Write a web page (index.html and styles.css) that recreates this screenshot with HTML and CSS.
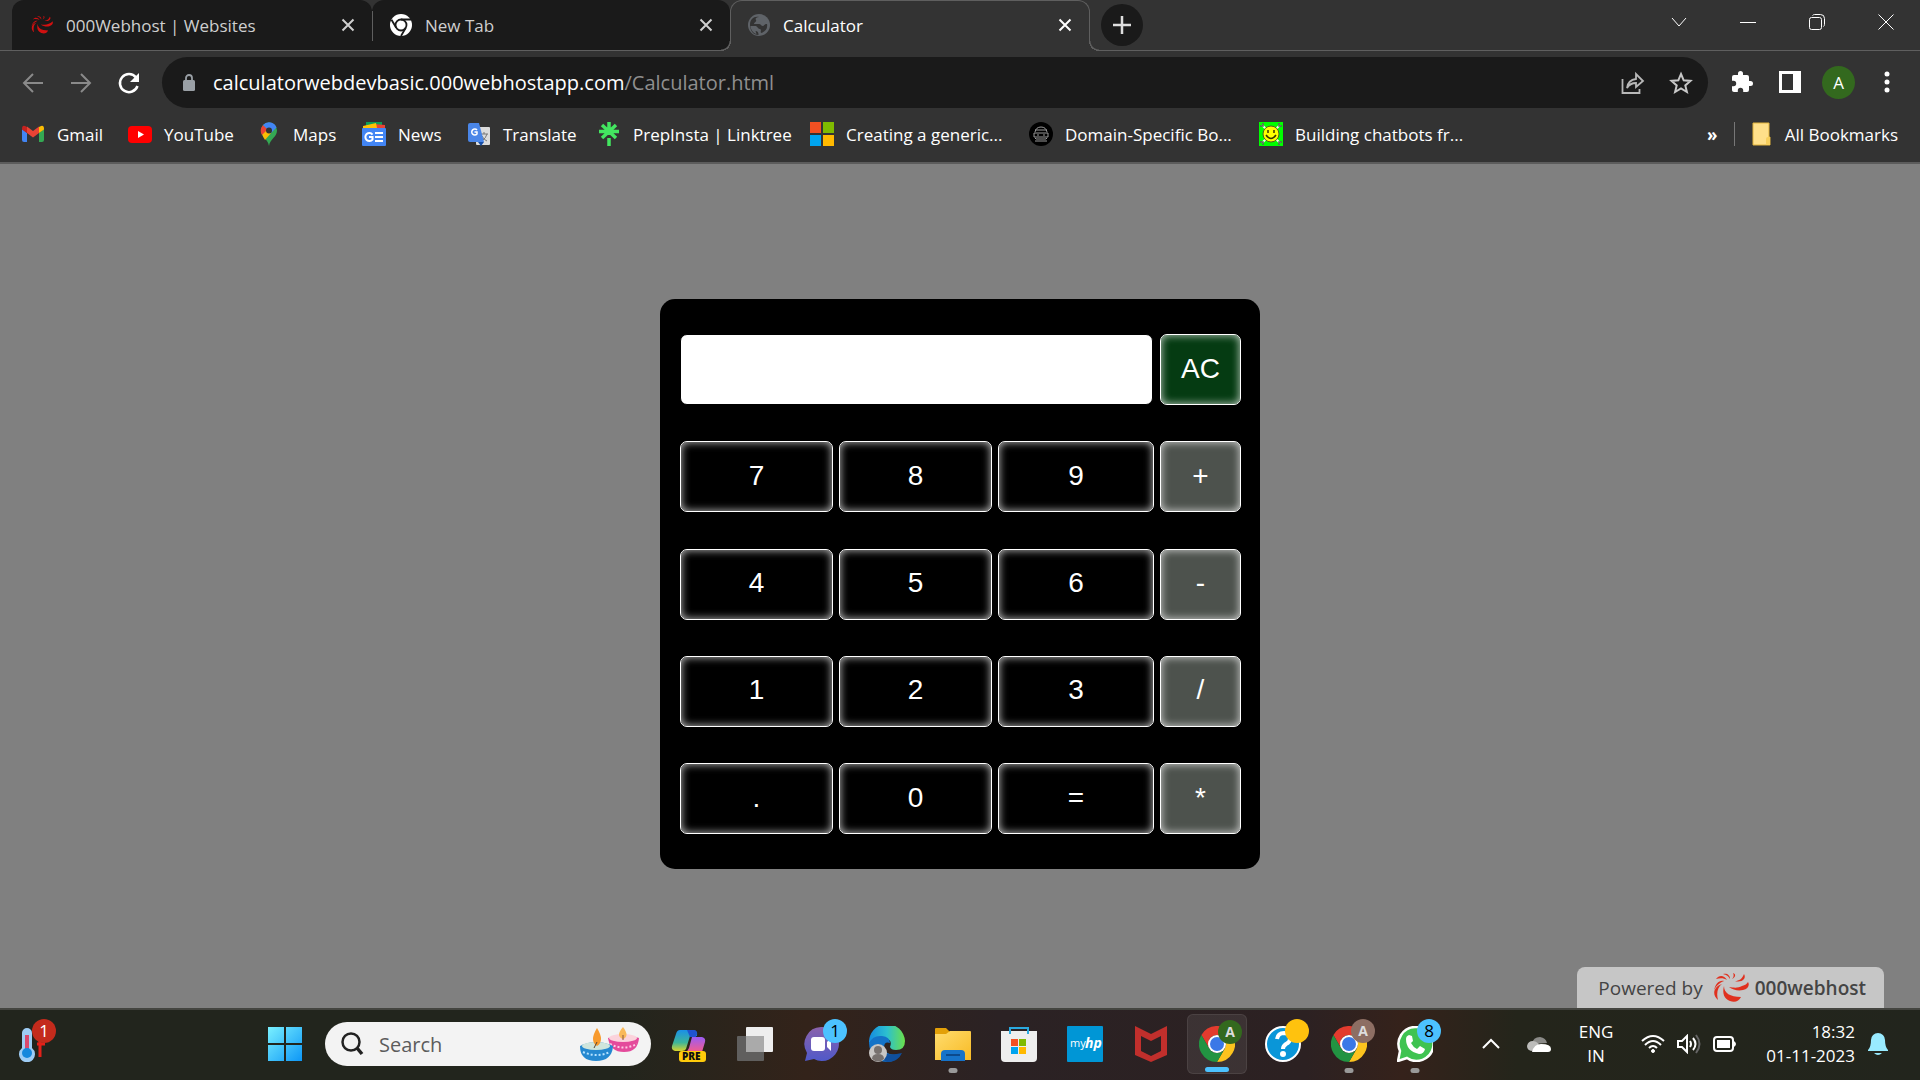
FILE: index.html
```html
<!DOCTYPE html>
<html lang="en">
<head>
<meta charset="utf-8">
<title>Calculator</title>
<link rel="stylesheet" href="styles.css">
</head>
<body>
<svg class="defs" aria-hidden="true">
  <defs>
    <symbol id="close" viewBox="0 0 14 14"><path d="M1.500 1.500l11 11M12.500 1.500l-11 11" stroke="currentColor" stroke-width="2" fill="none"/></symbol>
    <symbol id="swirl" viewBox="0 0 36 30">
      <path d="M35 9c2 3 0 7-5 8-5 1-10 0-14-3 6 1 9 1 13-1 3-1 5-2 6-4z"/>
      <path d="M11 13c0 7 6 11 17 11-2 4-6 6-11 4-6-2-8-8-6-15z"/>
      <path d="M9 11C5 14 3 19 5 27c-6-5-5-13 4-16z"/>
      <path d="M11 8C6 7 2 11 1 18c1-4 5-8 10-10z"/>
      <path d="M14 7C11 2 6 2 3 6c4-1 8-1 11 1z"/>
      <path d="M17 6c0-4-3-6-7-5 4 1 5 2 7 5zM19 6c4-2 4-5 1-6 1 2 1 4-1 6zM22 8c4 0 7-2 9-7 3 5-3 9-9 7z"/>
    </symbol>
    <symbol id="chrome" viewBox="0 0 36 36">
      <path fill="#e33b2e" d="M2.400 9A18 18 0 0 1 33.600 9H18a9 9 0 0 0-7.800 4.500L10 22z"/>
      <path fill="#fcc31e" d="M33.600 9A18 18 0 0 1 18 36l7.800-13.500A9 9 0 0 0 18 9z"/>
      <path fill="#229342" d="M18 36A18 18 0 0 1 2.400 9l7.800 13.500A9 9 0 0 0 25.800 22.500z"/>
      <circle cx="18" cy="18" r="9" fill="#fff"/><circle cx="18" cy="18" r="7" fill="#3b78e7"/>
    </symbol>
  </defs>
</svg>

<header class="browser">
  <div class="tabstrip">
    <div class="tab">
      <svg class="favicon swirl" viewBox="0 0 36 30"><use href="#swirl"/></svg>
      <span class="tab-title">000Webhost | Websites</span>
      <button class="tab-close" aria-label="Close tab"><svg width="14" height="14"><use href="#close"/></svg></button>
    </div>
    <div class="tab tab-second">
      <svg class="favicon" viewBox="0 0 22 22"><circle cx="11" cy="11" r="11" fill="#fff"/><circle cx="11" cy="11" r="5.500" fill="#fff" stroke="#1a1a1a" stroke-width="1.800"/><path d="M11 5.500h10M6.200 13.800L1.500 5.700M15.800 13.800L11 22" stroke="#1a1a1a" stroke-width="1.800"/></svg>
      <span class="tab-title">New Tab</span>
      <button class="tab-close" aria-label="Close tab"><svg width="14" height="14"><use href="#close"/></svg></button>
    </div>
    <div class="tab tab-active">
      <svg class="favicon" viewBox="0 0 22 22"><circle cx="11" cy="11" r="11" fill="#5f6368"/><path d="M11 3c-3 0-4 2-3 3 1 2-2 2-2 4h5c2 0 2 2 4 2 1 0 1-2 4-2 1 5-2 8-6 9-1-2 1-3-1-4-2 0-2-2-4-3H2.500c0 3 2 7 6 8l-1-3c2 0 3 1 3 4-5 0-8.500-4-8.500-10S6 2 11 3z" fill="#333"/></svg>
      <span class="tab-title">Calculator</span>
      <button class="tab-close" aria-label="Close tab"><svg width="14" height="14"><use href="#close"/></svg></button>
    </div>
    <button class="new-tab" aria-label="New tab"><svg width="18" height="18" viewBox="0 0 18 18"><path d="M9 0v18M0 9h18" stroke="#dedede" stroke-width="2.500"/></svg></button>
    <div class="window-controls">
      <button aria-label="Search tabs"><svg width="16" height="16" viewBox="0 0 16 16"><path d="M1 4l7 8 7-8"/></svg></button>
      <button aria-label="Minimize"><svg width="16" height="16" viewBox="0 0 16 16"><path d="M0 8.500h16"/></svg></button>
      <button aria-label="Restore"><svg width="16" height="16" viewBox="0 0 16 16"><rect x=".5" y="3.500" width="12" height="12" rx="2"/><path d="M3.500 1.500q1-1 2-1h6q4 0 4 4v6q0 1-1 2"/></svg></button>
      <button aria-label="Close"><svg width="16" height="16" viewBox="0 0 16 16"><path d="M.5.5l15 15M15.500.5l-15 15"/></svg></button>
    </div>
  </div>

  <div class="toolbar">
    <button class="nav dim" aria-label="Back"><svg width="24" height="24" viewBox="0 0 24 24"><path d="M22 12H3M12 3l-9 9 9 9"/></svg></button>
    <button class="nav dim" aria-label="Forward"><svg width="24" height="24" viewBox="0 0 24 24"><path d="M2 12h19M12 3l9 9-9 9"/></svg></button>
    <button class="nav" aria-label="Reload"><svg width="24" height="24" viewBox="0 0 24 24"><path d="M20.500 15A9 9 0 1 1 19 6.500" stroke-width="2.500"/><path d="M22 2v9h-9z" fill="#fff" stroke="none"/></svg></button>
    <div class="omnibox">
      <svg width="14" height="18" viewBox="0 0 14 18"><rect x="1" y="6" width="12" height="11" rx="1.500" fill="#9aa0a6"/><path d="M4 7V4a3 3 0 0 1 6 0v3" fill="none" stroke="#9aa0a6" stroke-width="1.800"/></svg>
      <div class="url">calculatorwebdevbasic.000webhostapp.com<span>/Calculator.html</span></div>
      <button aria-label="Share"><svg width="24" height="24" viewBox="0 0 24 24"><path d="M1.500 8v14h17v-4M6 17q1-8 9-9V3l7 7-7 6v-4q-6 0-9 5z" fill="none" stroke="#b8b8b8" stroke-width="1.800"/></svg></button>
      <button aria-label="Bookmark this page"><svg width="24" height="24" viewBox="0 0 24 24"><path d="M12 3l2.700 6.300 6.800.6-5.200 4.500 1.600 6.600-5.900-3.500L6.100 21l1.600-6.600-5.200-4.500 6.800-.6z" fill="none" stroke="#c8c8c8" stroke-width="2"/></svg></button>
    </div>
    <div class="toolbar-actions">
      <button aria-label="Extensions"><svg width="24" height="24" viewBox="0 0 24 24"><path fill="#fff" d="M20.500 11H19V7a2 2 0 0 0-2-2h-4V3.500a2.500 2.500 0 0 0-5 0V5H4a2 2 0 0 0-2 2v3.800h1.500a2.700 2.700 0 0 1 0 5.400H2V20c0 1.100.9 2 2 2h3.800v-1.500a2.700 2.700 0 0 1 5.400 0V22H17a2 2 0 0 0 2-2v-4h1.500a2.500 2.500 0 0 0 0-5z"/></svg></button>
      <button aria-label="Side panel"><svg width="22" height="22" viewBox="0 0 22 22"><path fill="#fff" fill-rule="evenodd" d="M0 0h22v22H0zM3 3v16h11V3z"/></svg></button>
      <button class="avatar" aria-label="Profile">A</button>
      <button aria-label="Menu"><svg width="6" height="22" viewBox="0 0 6 22" fill="#fff"><circle cx="3" cy="3" r="2.500"/><circle cx="3" cy="11" r="2.500"/><circle cx="3" cy="19" r="2.500"/></svg></button>
    </div>
  </div>

  <nav class="bookmarks">
    <div class="bookmark-list">
    <a href="#"><svg viewBox="0 0 24 24"><path fill="#4285f4" d="M1 7l5 4v9H3q-2 0-2-2z"/><path fill="#34a853" d="M23 7l-5 4v9h3q2 0 2-2z"/><path fill="#ea4335" d="M6 4.500l6 4.500 6-4.500V11l-6 4.500L6 11z"/><path fill="#c5221f" d="M1 7q0-4 3-3l2 1v6L1 7.500z"/><path fill="#fbbc04" d="M23 7q0-4-3-3l-2 1v6l5-3.500z"/></svg>Gmail</a>
    <a href="#"><svg viewBox="0 0 24 24"><rect y="4" width="24" height="17" rx="4" fill="#f00"/><path d="M10 9l6 3.500-6 3.500z" fill="#fff"/></svg>YouTube</a>
    <a href="#"><svg viewBox="0 0 24 24"><path fill="#34a853" d="M12 24C11 17 4 15 4 8.500a8 8 0 0 1 16 0C20 15 13 17 12 24z"/><path fill="#fbbc04" d="M5 12l5-6 4 5-6 7q-2-3-3-6z"/><path fill="#ea4335" d="M6 3l5 4-6 6q-3-5 1-10z"/><path fill="#4285f4" d="M6 3q3-3.500 8-2.500 4 1 5.500 5L14 11 6 3z"/><circle cx="12" cy="8.500" r="3" fill="#333"/></svg>Maps</a>
    <a href="#"><svg viewBox="0 0 24 24"><path fill="#0c9d58" d="M4 0h16v6H4z"/><path fill="#ea4335" d="M12 2l11 1v4H12z"/><path fill="#ffc107" d="M1 4l13-3 1 5-14 2z"/><rect y="6" width="24" height="18" rx="1" fill="#4285f4"/><path d="M10.500 12.500a4 4 0 1 0 0 5V15H7M13 11h8M13 15h8M13 19h8" fill="none" stroke="#fff" stroke-width="2"/></svg>News</a>
    <a href="#"><svg viewBox="0 0 24 24"><rect x="9" y="5" width="14" height="18" rx="1" fill="#dcdcdc"/><path d="M13 12h8M17 10v2M20 12q-1 4-5 7M15 14q2 4 5 5" stroke="#777" fill="none"/><path d="M3 1h9l5 19H3q-2 0-2-2V3q0-2 2-2z" fill="#4a86e8"/><path d="M11 20h6l-3 4z" fill="#174ea6"/><path d="M10 8a3 3 0 1 0 0 4v-2H7.500" fill="none" stroke="#fff" stroke-width="1.500"/></svg>Translate</a>
    <a href="#"><svg viewBox="0 0 24 24"><path d="M12 0v13M2 9.500h20M5 3l14 13M19 3L5 16M12 16v8" stroke="#43e660" stroke-width="3.500" fill="none"/></svg>PrepInsta | Linktree</a>
    <a href="#"><svg viewBox="0 0 24 24"><path fill="#f25022" d="M0 0h11v11H0z"/><path fill="#7fba00" d="M13 0h11v11H13z"/><path fill="#00a4ef" d="M0 13h11v11H0z"/><path fill="#ffb900" d="M13 13h11v11H13z"/></svg>Creating a generic...</a>
    <a href="#"><svg viewBox="0 0 24 24"><circle cx="12" cy="12" r="12" fill="#000"/><path d="M6 10q1-5 6-5t6 5M6 8h12M5 11h14v4H5zM8 13h2M14 13h2M6 16l1 1h10l1-1M6 19h12" fill="none" stroke="#999"/></svg>Domain-Specific Bo...</a>
    <a href="#"><svg viewBox="0 0 24 24"><path fill="#0f0" d="M0 0h24v24H0z"/><path d="M3 3l18 18M21 3L3 21" stroke="#efe" stroke-width="2"/><path d="M1 4h3V1M20 1v3h3M1 20h3v3M20 23v-3h3" stroke="#565" stroke-width="1.500" fill="none"/><circle cx="12" cy="12" r="8" fill="#ff0" stroke="#552"/><path d="M9 8v3M15 8v3M7 13q5 7 10 0" fill="none" stroke="#330" stroke-width="1.500"/></svg>Building chatbots fr...</a>
    </div>
    <button class="overflow" aria-label="More bookmarks">»</button>
    <a href="#" class="all-bookmarks"><svg viewBox="0 0 24 24"><path d="M3 1h16v14h1v8H3z" fill="#ffe08a" stroke="#e2b43c"/><path d="M16 22v-5q0-2 2-2h2v8h-3z" fill="#f7cf5c"/></svg>All Bookmarks</a>
  </nav>
</header>

<main class="page">
  <form class="calculator">
    <input class="display" type="text" aria-label="Display">
    <button type="button" class="clear">AC</button>
    <button type="button">7</button><button type="button">8</button><button type="button">9</button><button type="button" class="op">+</button>
    <button type="button">4</button><button type="button">5</button><button type="button">6</button><button type="button" class="op">-</button>
    <button type="button">1</button><button type="button">2</button><button type="button">3</button><button type="button" class="op">/</button>
    <button type="button">.</button><button type="button">0</button><button type="button">=</button><button type="button" class="op">*</button>
  </form>
  <a class="powered" href="#">Powered by <svg width="36" height="30" viewBox="0 0 36 30" fill="#e0301e"><use href="#swirl"/></svg><b>000webhost</b></a>
</main>

<footer class="taskbar">
  <button class="widget" aria-label="Weather">
    <svg width="36" height="36" viewBox="0 0 36 36"><path d="M3 7a5 5 0 0 1 10 0v15a8 8 0 1 1-10 0z" fill="#9fcdf5"/><path d="M6 9h4v15H6z" fill="#d9486e"/><circle cx="8" cy="27" r="5" fill="#1688dd"/><path d="M21 15v16M18 18h8" stroke="#e32119" stroke-width="3"/></svg>
    <span class="badge badge-red">1</span>
  </button>
  <div class="taskbar-center">
    <button class="start" aria-label="Start"><svg width="36" height="36" viewBox="0 0 36 36"><defs><linearGradient id="win" x1="0" y1="0" x2="36" y2="36" gradientUnits="userSpaceOnUse"><stop stop-color="#7df3ff"/><stop offset="1" stop-color="#0a94f6"/></linearGradient></defs><path fill="url(#win)" d="M1 1h16v16H1zM19 1h16v16H19zM1 19h16v16H1zM19 19h16v16H19z"/></svg></button>
    <label class="search">
      <svg width="24" height="24" viewBox="0 0 24 24"><circle cx="11" cy="10" r="8.500" fill="none" stroke="#222" stroke-width="2.500"/><path d="M17 16l5 6" stroke="#222" stroke-width="3.500"/></svg>
      <input type="text" placeholder="Search" aria-label="Search">
      <svg width="60" height="36" viewBox="0 0 60 36">
        <path d="M28 12q16-6 31 0-1 14-15 14T28 12z" fill="#e44a9b"/><ellipse cx="43" cy="12" rx="14" ry="4" fill="#fbd3dc"/><path d="M43 1q-8 9 0 12 7-3 0-12z" fill="#f9b95a"/><path d="M43 9v5" stroke="#854" /><path d="M30 18q13 7 27 0" stroke="#ffc9e4" stroke-width="2" stroke-dasharray="2 2" fill="none"/>
        <path d="M0 20q16-8 33 0-1 15-17 15T0 20z" fill="#2588d0"/><ellipse cx="16" cy="20" rx="14" ry="4" fill="#cfe5dc"/><path d="M17 2q-8 13 0 18 8-5 0-18z" fill="#f79a2d"/><path d="M17 16l-3 6" stroke="#543"/><path d="M3 26q14 6 27 0" stroke="#b5e2ff" stroke-width="2" stroke-dasharray="2 2" fill="none"/>
      </svg>
    </label>
    <div class="apps">
      <button class="app" aria-label="Copilot"><svg width="36" height="36" viewBox="0 0 36 36"><defs><linearGradient id="cpa" x2="0" y2="1"><stop stop-color="#1a8fe8"/><stop offset=".6" stop-color="#3db59a"/><stop offset="1" stop-color="#d8d32c"/></linearGradient><linearGradient id="cpb" x2="0" y2="1"><stop stop-color="#9a5cf5"/><stop offset="1" stop-color="#f65c8a"/></linearGradient></defs><path d="M9 4h12l4 1q2 2 1 5h-7l-4 13q-1 2-4 2H4q-4-1-3-5L5 8q1-4 4-4z" fill="url(#cpa)"/><path d="M16 4h7q3 0 3 4l-1 3h-6z" fill="#1f53cf"/><path d="M21 11h10q4 1 3 5l-3 10H14q3-1 4-4z" fill="url(#cpb)"/><rect x="8" y="25" width="27" height="11" rx="3" fill="#ffcb0b"/><text x="11" y="34" class="pre">PRE</text></svg></button>
      <button class="app" aria-label="Task view"><svg width="36" height="36" viewBox="0 0 36 36"><rect x="9" y="1" width="27" height="25" rx="1" fill="#eee"/><rect y="10" width="27" height="25" rx="1" fill="#666" fill-opacity=".9"/><path d="M9 10h18v16H9z" fill="#aaa"/></svg></button>
      <button class="app" aria-label="Chat"><svg width="36" height="36" viewBox="0 0 36 36"><defs><linearGradient id="cht" x2="0" y2="1"><stop stop-color="#8a62ab"/><stop offset="1" stop-color="#5059c9"/></linearGradient></defs><path d="M18 1a17 17 0 1 1-7 32l-9 2 2-8A17 17 0 0 1 18 1z" fill="url(#cht)"/><rect x="8" y="11" width="14" height="14" rx="3" fill="#fff"/><path d="M24 16l4-4v13l-4-4z" fill="#fff"/></svg><span class="badge">1</span></button>
      <button class="app" aria-label="Edge"><svg width="36" height="36" viewBox="0 0 36 36"><defs><linearGradient id="edg"><stop stop-color="#158be0"/><stop offset=".5" stop-color="#2cc0cf"/><stop offset="1" stop-color="#6be04a"/></linearGradient></defs><path d="M0 17A18 18 0 0 1 36 15q0 9-9 9-5 0-6-3 3-8-5-8Q7 13 0 17z" fill="url(#edg)"/><path d="M0 17q4-8 13-7 8 1 8 7-6-2-6 5 2 9 17 6-5 8-14 8Q1 35 0 17z" fill="#1473c8"/><path d="M13 20q0 12 20 7-4 9-15 9-9-4-5-16z" fill="#0f4f9d"/><circle cx="9" cy="27" r="9" fill="#c8c6c5"/><circle cx="9" cy="24" r="4" fill="#77716f"/><path d="M3 33q0-5 6-5t6 5q-6 5-12 0z" fill="#77716f"/></svg></button>
      <button class="app running" aria-label="File Explorer"><svg width="36" height="36" viewBox="0 0 36 36"><defs><linearGradient id="fol" x2="1" y2="1"><stop stop-color="#ffdc6e"/><stop offset="1" stop-color="#f8bb25"/></linearGradient></defs><path d="M0 3q0-1 1-1h10l4 4v10H0z" fill="#e3a008"/><path d="M0 8h11l4-3h20q1 0 1 1v28H0z" fill="url(#fol)"/><path d="M6 35v-7q0-4 4-4h16q4 0 4 4v7z" fill="#1673c9"/><path d="M11 29h14" stroke="#0c4a8c" stroke-width="2"/></svg></button>
      <button class="app" aria-label="Microsoft Store"><svg width="36" height="36" viewBox="0 0 36 36"><path d="M0 5h36v27q0 4-4 4H4q-4 0-4-4z" fill="#eee"/><path d="M9 8V2h18v6" fill="none" stroke="#2aa9df" stroke-width="2"/><path fill="#f25022" d="M10 13h7v7h-7z"/><path fill="#7fba00" d="M18 13h7v7h-7z"/><path fill="#00a4ef" d="M10 21h7v7h-7z"/><path fill="#ffb900" d="M18 21h7v7h-7z"/></svg></button>
      <button class="app" aria-label="myHP"><svg width="36" height="36" viewBox="0 0 36 36"><rect width="36" height="36" rx="1" fill="#0096d6"/><text x="3" y="21" class="my">my</text><text x="18" y="22" class="hp">hp</text></svg></button>
      <button class="app" aria-label="McAfee"><svg width="36" height="36" viewBox="0 0 36 36"><path fill="#c12f2c" fill-rule="evenodd" d="M2 0l16 8 16-8v29l-16 7-16-7zM8 10v15l10 5 10-5V10l-10 5z"/></svg></button>
      <button class="app current" aria-label="Chrome"><svg width="36" height="36"><use href="#chrome"/></svg><span class="badge badge-green">A</span></button>
      <button class="app" aria-label="Help"><svg width="36" height="36" viewBox="0 0 36 36"><circle cx="18" cy="18" r="17" fill="#0a96d8" stroke="#fff" stroke-width="2"/><path d="M12 13q1-6 7-6 7 1 6 6 0 3-4 5-3 2-3 5" fill="none" stroke="#fff" stroke-width="4"/><circle cx="18" cy="28" r="3" fill="#fff"/></svg><span class="badge badge-yellow"></span></button>
      <button class="app running" aria-label="Chrome, second profile"><svg width="36" height="36"><use href="#chrome"/></svg><span class="badge badge-brown">A</span></button>
      <button class="app running" aria-label="WhatsApp"><svg width="36" height="36" viewBox="0 0 36 36"><path d="M18 1a17 17 0 1 1-8 31l-9 3 2-10A17 17 0 0 1 18 1z" fill="#3fc351" stroke="#fff" stroke-width="2.500"/><path d="M12 9l3 1 1 5-2 2q2 4 6 6l3-3 5 3q-1 5-6 5Q9 25 9 13q0-3 3-4z" fill="#fff"/></svg><span class="badge">8</span></button>
    </div>
  </div>
  <div class="tray">
    <button aria-label="Show hidden icons"><svg width="18" height="12" viewBox="0 0 18 12"><path d="M1 10l8-8 8 8" fill="none" stroke="#fff" stroke-width="2"/></svg></button>
    <svg width="24" height="18" viewBox="0 0 24 18"><path d="M5 9q1-7 8-7 6 1 7 6z" fill="#8b8b88"/><path d="M6 16q-6 0-6-5 1-5 6-5 3 0 6 3z" fill="#bcbcba"/><path d="M5 17q2-8 9-8 10 0 10 5 0 3-3 3z" fill="#fff"/></svg>
    <button class="lang">ENG<br>IN</button>
    <button class="status" aria-label="Network, sound and battery">
      <svg width="24" height="20" viewBox="0 0 24 20" fill="none" stroke="#fff" stroke-width="2"><path d="M1 7q11-10 22 0M4 11q8-8 16 0M8 14q4-4 8 0"/><circle cx="12" cy="17" r="1.500" fill="#fff" stroke-width="1"/></svg>
      <svg width="24" height="20" viewBox="0 0 24 20" fill="none" stroke="#fff" stroke-width="2"><path d="M1 7h4l5-5v16l-5-5H1zM13 7q2 3 0 6M16 4q5 6 0 12"/><path d="M19 1q7 9 0 18" stroke="#666"/></svg>
      <svg width="24" height="20" viewBox="0 0 24 20"><rect x="1" y="3" width="19" height="14" rx="3" fill="none" stroke="#fff" stroke-width="2"/><path d="M4 6h13v8H4zM21 7q4 3 0 6z" fill="#fff"/></svg>
    </button>
    <button class="clock">18:32<br>01-11-2023</button>
    <svg width="20" height="24" viewBox="0 0 20 24"><path d="M0 18q3-3 3-10a7 7 0 0 1 14 0q0 7 3 10v1H0zM6 21h8q-4 4-8 0z" fill="#99ebff"/></svg>
  </div>
</footer>
</body>
</html>
```
FILE: styles.css
```css
* { box-sizing: border-box; }
body {
  margin: 0;
  min-height: 100vh;
  display: flex;
  flex-direction: column;
  font-family: "Open Sans", "Noto Sans", sans-serif;
  font-size: 17px;
  color: #fff;
  background: #808080;
}
button {
  display: flex;
  align-items: center;
  justify-content: center;
  padding: 0;
  border: 0;
  background: none;
  color: inherit;
  font: inherit;
}
a { color: inherit; text-decoration: none; }
svg { display: block; flex: none; }
.defs { position: absolute; width: 0; height: 0; }

/* Browser chrome */
.browser { background: #333; border-bottom: 2px solid #5c5c5c; }
.tabstrip {
  display: flex;
  height: 51px;
  padding-left: 12px;
  border-bottom: 1px solid #5f5f5f;
}
.tab {
  display: flex;
  align-items: center;
  width: 360px;
  height: 50px;
  padding: 0 16px 0 19px;
  background: #1a1a1a;
  border-radius: 12px 12px 0 0;
  color: #cfcfcf;
}
.tab-second {
  width: 358px;
  padding-left: 18px;
  background: linear-gradient(#5f5f5f, #5f5f5f) 0 11px / 1px 30px no-repeat #1a1a1a;
}
.tab-active {
  position: relative;
  height: 51px;
  padding: 0 16px 2px 17px;
  border: 1px solid #5f5f5f;
  border-bottom: 0;
  background: #333;
  color: #fff;
}
/* Curved feet of the active tab */
.tab-active::before, .tab-active::after {
  content: "";
  position: absolute;
  bottom: 0;
  width: 10px;
  height: 10px;
}
.tab-active::before {
  right: 100%;
  background: radial-gradient(circle at 0 0, #1a1a1a 8px, #5f5f5f 9px, #5f5f5f 10px, #333 10px);
}
.tab-active::after {
  left: 100%;
  background: radial-gradient(circle at 100% 0, #333 8px, #5f5f5f 9px, #5f5f5f 10px, #333 10px);
}
.tab .favicon { width: 22px; height: 22px; margin-right: 13px; }
.swirl { fill: #d01010; }
.tab-title { flex: 1; }
.tab-close { width: 16px; height: 24px; }
.new-tab {
  width: 42px;
  height: 42px;
  margin: 4px 0 0 11px;
  border-radius: 50%;
  background: #1a1a1a;
}
.window-controls { display: flex; margin-left: auto; height: 43px; }
.window-controls button { width: 69px; }
.window-controls svg { fill: none; stroke: #fff; }

.toolbar { display: flex; align-items: center; padding: 6px 9px 0 9px; }
.nav { width: 48px; height: 48px; }
.nav svg { fill: none; stroke: #fff; stroke-width: 2; }
.nav.dim svg { stroke: #8a8a8a; }
.omnibox {
  display: flex;
  flex: 1;
  align-items: center;
  height: 51px;
  margin-left: 9px;
  padding: 0 3px 0 20px;
  border-radius: 26px;
  background: #1a1a1a;
}
.omnibox button { width: 48px; height: 48px; }
.url { flex: 1; padding-left: 17px; font-size: 20px; }
.url span { color: #8f8f8f; }
.toolbar-actions { display: flex; padding-left: 10px; }
.toolbar-actions button { width: 48px; height: 48px; }
.toolbar-actions .avatar { width: 33px; height: 33px; margin: 8px; border-radius: 50%; background: #33691e; }

.bookmarks { display: flex; align-items: center; height: 54px; padding: 0 22px 2px 21px; font-size: 17px; white-space: nowrap; }
.bookmarks a { display: flex; align-items: center; gap: 12px; }
.bookmarks svg { width: 24px; height: 24px; }
.bookmark-list { display: grid; grid-template-columns: 107px 129px 105px 105px 130px 213px 219px 230px 220px; }
.overflow { margin-left: auto; width: 43px; font-weight: 700; }
.bookmarks .all-bookmarks { gap: 11px; padding-left: 15px; border-left: 1px solid #777; }

/* Calculator page */
.page {
  display: flex;
  flex: 1;
  flex-direction: column;
  align-items: center;
  justify-content: space-between;
  padding-top: 135px;
}
.calculator {
  display: grid;
  grid-template-columns: 153fr 153fr 156fr 81fr;
  align-content: space-between;
  gap: 36px 6px;
  width: 600px;
  min-height: 570px;
  padding: 35px 19px 35px 20px;
  border-radius: 15px;
  background: #000;
}
.calculator button, .display {
  height: 71px;
  padding-bottom: 2px;
  border: 1px solid #fff;
  border-radius: 7px;
  background: #000;
  box-shadow: inset 0 0 8px #ffffffc8;
  font-family: "Liberation Sans", Arial, sans-serif;
  font-size: 28px;
}
.calculator .display {
  grid-column: span 3;
  min-width: 0;
  margin-right: 1px;
  border-color: #000;
  background: #fff;
}
.calculator .clear { background: #053b12; }
.calculator .op { background: #4d524d; }
.powered {
  display: flex;
  align-items: center;
  align-self: flex-end;
  height: 41px;
  margin-right: 36px;
  padding: 0 18px 0 21px;
  border-radius: 8px 8px 0 0;
  background: #c6c6c6;
  color: #444;
  font-size: 19px;
}
.powered svg { margin: 0 6px 0 10px; }
.powered b { font-weight: 600; }

/* Taskbar */
.taskbar {
  display: flex;
  align-items: center;
  height: 72px;
  padding: 0 32px 2px 16px;
  border-top: 2px solid #444540;
  background: linear-gradient(90deg, #22251d 0 32%, #33231a 42%, #2b2224 52%, #2c2122 68%, #35221b 73%, #24251b 79%, #22251d);
}
.taskbar button { position: relative; flex: none; }
.widget { width: 48px; height: 60px; padding-right: 6px; }
.badge {
  position: absolute;
  top: 5px;
  right: 4px;
  width: 24px;
  height: 24px;
  border-radius: 50%;
  background: #4cc2ff;
  color: #000;
  font-size: 17px;
  line-height: 24px;
}
.badge-red { right: 8px; background: #c42b1c; color: #fff; }
.badge-green { background: #33691e; }
.badge-yellow { background: #ffc20e; }
.badge-brown { background: #8d6e63; }
.badge-green, .badge-brown { color: #ddd; font-size: 14px; font-weight: 700; }
.taskbar-center { display: flex; align-items: center; margin-left: 191px; }
.start { width: 60px; height: 60px; }
.search {
  display: flex;
  align-items: center;
  width: 326px;
  height: 44px;
  margin: 0 2px 0 10px;
  padding: 0 11px 0 15px;
  border-radius: 22px;
  background: #f3f3f3;
}
.search input { flex: 1; min-width: 0; padding: 0 0 0 15px; border: 0; background: none; font: 20px "Open Sans", sans-serif; }
.search input::placeholder { color: #5c5c5c; opacity: 1; }
.apps { display: flex; gap: 6px; padding-left: 6px; }
.app { width: 60px; height: 60px; border-radius: 6px; }
.pre { font: 800 10px "Open Sans", sans-serif; fill: #111; }
.my { font: 11px "Open Sans", sans-serif; fill: #fff; }
.hp { font: italic 700 14px "Open Sans", sans-serif; fill: #fff; }
.current { background: #ffffff14; border: 1px solid #ffffff14; }
.running::after, .current::after {
  content: "";
  position: absolute;
  left: 50%;
  bottom: 1px;
  width: 9px;
  height: 5px;
  border-radius: 3px;
  background: #999;
  transform: translateX(-50%);
}
.current::after { width: 24px; background: #4cc2ff; }
.tray { display: flex; align-items: center; margin-left: auto; font-size: 17px; line-height: 24px; }
.tray > button:first-child { margin-right: 27px; }
.lang { width: 90px; }
.status { gap: 12px; }
.clock { width: 118px; margin-right: 13px; justify-content: flex-end; text-align: right; }
```
